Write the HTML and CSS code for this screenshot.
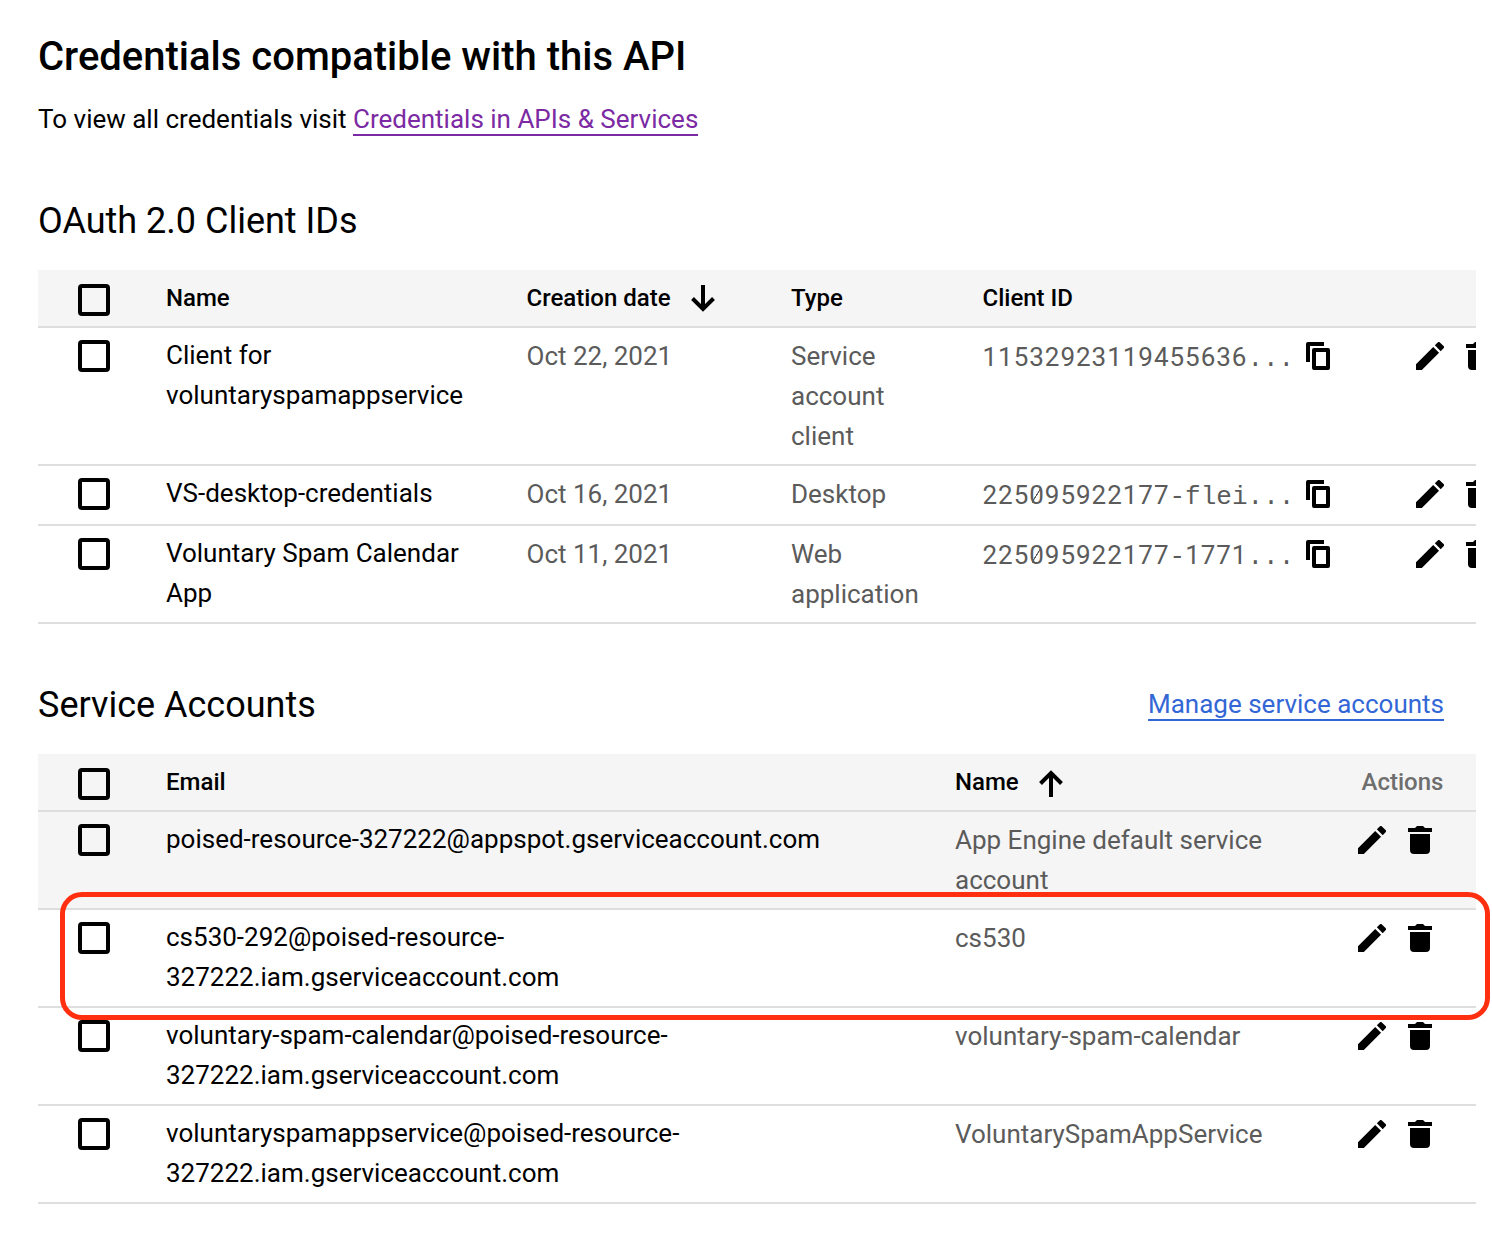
FILE: index.html
```html
<!DOCTYPE html>
<html lang="en">
<head>
<meta charset="utf-8">
<title>Credentials compatible with this API</title>
<link rel="stylesheet" href="styles.css">
</head>
<body>
<svg class="sprite" aria-hidden="true">
  <symbol id="edit" viewBox="3 3 18 18"><path d="M3 17.25V21h3.75L17.81 9.94l-3.75-3.75L3 17.25zM20.71 7.04a1 1 0 0 0 0-1.41l-2.34-2.34a1 1 0 0 0-1.41 0l-1.83 1.83 3.75 3.75 1.83-1.83z"/></symbol>
  <symbol id="trash" viewBox="0 0 24 28"><path d="M0 2h7l2-2h6l2 2h7v4H0zM2 8h20v16a4 4 0 0 1-4 4H6a4 4 0 0 1-4-4z"/></symbol>
  <symbol id="copy" viewBox="0 0 24 28"><path d="M2 0h16v4H4v16H0V2a2 2 0 0 1 2-2z"/><path fill-rule="evenodd" d="M8 6h14a2 2 0 0 1 2 2v18a2 2 0 0 1-2 2H8a2 2 0 0 1-2-2V8a2 2 0 0 1 2-2zm2 4v14h10V10z"/></symbol>
  <symbol id="down" viewBox="0 0 24 27"><path d="M12 0v24M1.5 13.5L12 24l10.500-10.500" fill="none" stroke="#000" stroke-width="4"/></symbol>
  <symbol id="up" viewBox="0 0 24 27"><path d="M12 27V3M1.500 13.500L12 3l10.500 10.500" fill="none" stroke="#000" stroke-width="4"/></symbol>
</svg>
<main class="page">
  <h1>Credentials compatible with this API</h1>
  <p class="intro">To view all credentials visit <a class="visited" href="#">Credentials in APIs &amp; Services</a></p>

  <div class="section-head"><h2>OAuth 2.0 Client IDs</h2></div>
  <section class="table clients">
    <div class="row head">
      <i class="check"></i><div>Name</div><div class="sort">Creation date<svg class="arrow"><use href="#down"/></svg></div><div>Type</div><div>Client ID</div>
    </div>
    <div class="row">
      <i class="check"></i><div class="main">Client for voluntaryspamappservice</div><div>Oct 22, 2021</div><div>Service account client</div>
      <div class="id"><span class="digits">11532923119455636</span><span class="mono">...</span></div>
      <svg class="icon copy"><use href="#copy"/></svg>
      <div class="actions"><svg class="icon edit"><use href="#edit"/></svg><svg class="icon trash"><use href="#trash"/></svg></div>
    </div>
    <div class="row">
      <i class="check"></i><div class="main">VS-desktop-credentials</div><div>Oct 16, 2021</div><div>Desktop</div>
      <div class="id"><span class="digits">225<span class="zero">0</span>95922177</span><span class="mono">-flei...</span></div>
      <svg class="icon copy"><use href="#copy"/></svg>
      <div class="actions"><svg class="icon edit"><use href="#edit"/></svg><svg class="icon trash"><use href="#trash"/></svg></div>
    </div>
    <div class="row">
      <i class="check"></i><div class="main">Voluntary Spam Calendar App</div><div>Oct 11, 2021</div><div>Web application</div>
      <div class="id"><span class="digits">225<span class="zero">0</span>95922177</span><span class="mono">-</span><span class="digits">1771</span><span class="mono">...</span></div>
      <svg class="icon copy"><use href="#copy"/></svg>
      <div class="actions"><svg class="icon edit"><use href="#edit"/></svg><svg class="icon trash"><use href="#trash"/></svg></div>
    </div>
  </section>

  <div class="section-head second"><h2>Service Accounts</h2><a class="manage" href="#">Manage service accounts</a></div>
  <section class="table accounts">
    <div class="row head">
      <i class="check"></i><div>Email</div><div class="sort">Name<svg class="arrow"><use href="#up"/></svg></div><div class="muted">Actions</div>
    </div>
    <div class="row hover">
      <i class="check"></i><div class="main">poised-resource-327222@appspot.gserviceaccount.com</div><div>App Engine default service account</div>
      <div class="actions"><svg class="icon edit"><use href="#edit"/></svg><svg class="icon trash"><use href="#trash"/></svg></div>
    </div>
    <div class="row marked">
      <i class="check"></i><div class="main">cs530-292@poised-resource-<br>327222.iam.gserviceaccount.com</div><div>cs530</div>
      <div class="actions"><svg class="icon edit"><use href="#edit"/></svg><svg class="icon trash"><use href="#trash"/></svg></div>
      <span class="highlight"></span>
    </div>
    <div class="row">
      <i class="check"></i><div class="main">voluntary-spam-calendar@poised-resource-<br>327222.iam.gserviceaccount.com</div><div>voluntary-spam-calendar</div>
      <div class="actions"><svg class="icon edit"><use href="#edit"/></svg><svg class="icon trash"><use href="#trash"/></svg></div>
    </div>
    <div class="row">
      <i class="check"></i><div class="main">voluntaryspamappservice@poised-resource-<br>327222.iam.gserviceaccount.com</div><div>VoluntarySpamAppService</div>
      <div class="actions"><svg class="icon edit"><use href="#edit"/></svg><svg class="icon trash"><use href="#trash"/></svg></div>
    </div>
  </section>
</main>
</body>
</html>
```
FILE: styles.css
```css
* { box-sizing: border-box; }
body {
  margin: 0;
  background: #fff;
  color: #000;
  font: 400 26px/40px Roboto, sans-serif;
}
.sprite { display: none; }
.page { width: 1492px; height: 1244px; padding: 33px 16px 0 38px; overflow: hidden; }

h1 { margin: 0; font-size: 40px; line-height: 48px; font-weight: 500; }
h2 { margin: 0; font-size: 36px; line-height: 48px; font-weight: 400; }
.intro { margin: 18px 0 0; }
a { display: inline-block; line-height: 30px; text-decoration: none; border-bottom: 2px solid; }
.visited { color: #7b2aa3; }
.manage { color: #3367d6; margin: 8px 32px 0 0; }

.section-head { display: flex; justify-content: space-between; align-items: flex-start; margin: 58px 0 25px; }
.section-head.second { margin-top: 57px; }

.row {
  display: grid;
  align-items: start;
  min-height: 60px;
  padding: 8px 0 8px 40px;
  border-bottom: 2px solid #dedede;
  color: #5b5b5b;
}
.clients { overflow: hidden; }
.clients .row { grid-template-columns: 88px 360.500px 264.500px 191.500px 323.500px 110px 1fr; }
.accounts .row { grid-template-columns: 88px 789px 403px 1fr; }
.clients .row > :nth-child(2) { padding-right: 60px; }
.clients .row > :nth-child(4) { padding-right: 64px; }
.accounts .row > :nth-child(3) { padding-right: 80px; }

.row.head { min-height: 58px; background: #f5f5f5; color: #000; font-size: 24px; font-weight: 500; }
.row .muted { color: #6e6e6e; padding-left: 3.500px; }
.row.hover { background: #f5f5f5; }
.main { color: #000; margin: -1px 0 1px; }

.check { width: 32px; height: 32px; margin-top: 4px; border: 4px solid #000; border-radius: 4px; }
.head .check { margin-top: 6px; }

.sort { display: flex; align-items: flex-start; gap: 20px; }
.arrow { width: 24px; height: 27px; margin-top: 7px; }
.accounts .arrow { margin-top: 8px; }

.id { height: 40px; margin-top: 1px; white-space: pre; }
.digits { letter-spacing: 0.97px; }
.mono { font-family: "Liberation Mono", monospace; line-height: 30px; }
.zero { background: linear-gradient(122deg, transparent 45%, #5b5b5b 47%, #5b5b5b 53%, transparent 55%) 3px 9px / 8px 14px no-repeat; }

.icon { display: block; flex: none; fill: #000; }
.copy { width: 24px; height: 28px; margin-top: 6px; }
.edit { width: 28px; height: 28px; }
.trash { width: 24px; height: 28px; }
.actions { display: flex; gap: 22px; margin-top: 6px; }

.marked { position: relative; }
.highlight {
  position: absolute;
  left: 22px;
  top: -18px;
  width: 1430px;
  height: 128px;
  border: 5px solid #ff2f0f;
  border-radius: 22px;
}
```
